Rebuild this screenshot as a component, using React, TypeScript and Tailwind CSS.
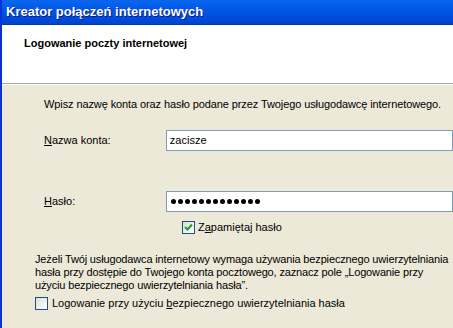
import React from 'react';

const font = { fontFamily: '"Liberation Sans", Arial, sans-serif' };

function Check({ checked }: { checked: boolean }) {
  return (
    <span className="flex h-[13px] w-[13px] shrink-0 items-center justify-center border border-[#1c5180] bg-gradient-to-br from-[#dcdcd7] to-white">
      {checked && (
        <svg width="9" height="9" viewBox="0 0 9 9">
          <path d="M1 4 L3.5 6.5 L8 1.5" fill="none" stroke="#21a121" strokeWidth="2" />
        </svg>
      )}
    </span>
  );
}

export default function App() {
  return (
    <div className="h-[328px] w-[453px] overflow-hidden border-l-2 border-[#0831d9] bg-[#ece9d8] text-[11px] text-black" style={font}>
      <div className="flex h-[25px] items-center bg-gradient-to-b from-[#0a66f0] via-[#0054e3] to-[#0043cf] pl-[4px] border-b border-[#003bb0]">
        <span className="text-[13px] font-bold text-white [text-shadow:1px_1px_0_#0a1883]">Kreator połączeń internetowych</span>
      </div>

      <div className="h-[59px] border-b border-[#aca899] bg-white pl-[22px] pt-[12px]">
        <div className="font-bold leading-[13px]">Logowanie poczty internetowej</div>
      </div>
      <div className="h-px bg-white" />

      <div className="pl-[42px] pt-[13px]">
        <div className="whitespace-nowrap leading-[13px] tracking-[-0.1px]">Wpisz nazwę konta oraz hasło podane przez Twojego usługodawcę internetowego.</div>

        <div className="mt-[19px] flex h-[21px] items-center">
          <span className="w-[136px]"><u>N</u>azwa konta:</span>
          <div className="flex h-[21px] w-[320px] items-center border border-[#7f9db9] bg-white pl-[3px]">zacisze</div>
        </div>

        <div className="mt-[40px] flex h-[21px] items-center">
          <span className="w-[136px]"><u>H</u>asło:</span>
          <div className="flex h-[21px] w-[320px] items-center gap-[2px] border border-[#7f9db9] bg-white pl-[4px]">
            {Array.from({ length: 13 }).map((_, i) => (
              <span key={i} className="h-[5px] w-[5px] rounded-full bg-black" />
            ))}
          </div>
        </div>

        <div className="mt-[9px] flex items-center gap-[3px] pl-[138px]">
          <Check checked />
          <span className="leading-[13px]">Z<u>a</u>pamiętaj hasło</span>
        </div>
      </div>

      <div className="pl-[33px] pt-[19px]">
        <p className="whitespace-nowrap leading-[13px] tracking-[-0.15px]">
          Jeżeli Twój usługodawca internetowy wymaga używania bezpiecznego uwierzytelniania
          <br />
          hasła przy dostępie do Twojego konta pocztowego, zaznacz pole „Logowanie przy
          <br />
          użyciu bezpiecznego uwierzytelniania hasła”.
        </p>
        <div className="mt-[5px] flex items-center gap-[4px]">
          <Check checked={false} />
          <span className="leading-[13px]">Logowanie przy użyciu <u>b</u>ezpiecznego uwierzytelniania hasła</span>
        </div>
      </div>
    </div>
  );
}
